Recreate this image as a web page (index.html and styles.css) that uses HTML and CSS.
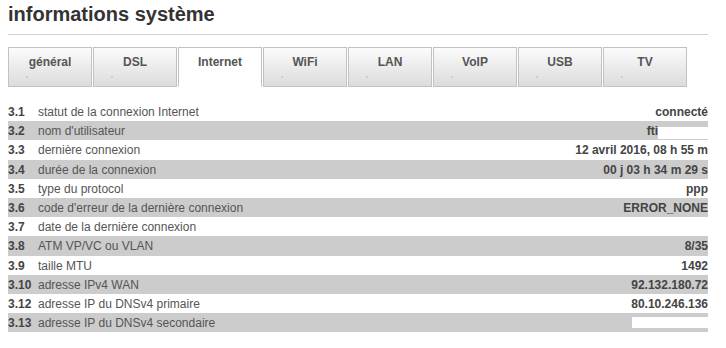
FILE: index.html
```html
<!DOCTYPE html>
<html lang="fr">
<head>
  <meta charset="UTF-8" />
  <title>informations système</title>
  <link rel="stylesheet" href="styles.css">
</head>
<body>
  <h1 class="page-title">informations système</h1>
  <div class="rule"></div>

  <ul class="tabs">
    <li class="tab">général</li>
    <li class="tab">DSL</li>
    <li class="tab active">Internet</li>
    <li class="tab">WiFi</li>
    <li class="tab">LAN</li>
    <li class="tab">VoIP</li>
    <li class="tab">USB</li>
    <li class="tab">TV</li>
  </ul>

  <div class="info">
    <div class="row"><span class="num">3.1</span><span class="label">statut de la connexion Internet</span><span class="value">connecté</span></div>
    <div class="row"><span class="num">3.2</span><span class="label">nom d'utilisateur</span><span class="value">fti<span class="blank blank-user"></span></span></div>
    <div class="row"><span class="num">3.3</span><span class="label">dernière connexion</span><span class="value">12 avril 2016, 08 h 55 m</span></div>
    <div class="row"><span class="num">3.4</span><span class="label">durée de la connexion</span><span class="value">00 j 03 h 34 m 29 s</span></div>
    <div class="row"><span class="num">3.5</span><span class="label">type du protocol</span><span class="value">ppp</span></div>
    <div class="row"><span class="num">3.6</span><span class="label">code d'erreur de la dernière connexion</span><span class="value">ERROR_NONE</span></div>
    <div class="row"><span class="num">3.7</span><span class="label">date de la dernière connexion</span><span class="value"></span></div>
    <div class="row"><span class="num">3.8</span><span class="label">ATM VP/VC ou VLAN</span><span class="value">8/35</span></div>
    <div class="row"><span class="num">3.9</span><span class="label">taille MTU</span><span class="value">1492</span></div>
    <div class="row"><span class="num">3.10</span><span class="label">adresse IPv4 WAN</span><span class="value">92.132.180.72</span></div>
    <div class="row"><span class="num">3.12</span><span class="label">adresse IP du DNSv4 primaire</span><span class="value">80.10.246.136</span></div>
    <div class="row"><span class="num">3.13</span><span class="label">adresse IP du DNSv4 secondaire</span><span class="value"><span class="blank blank-dns"></span></span></div>
  </div>
</body>
</html>
```

FILE: styles.css
```css
body {
  font-family: 'Liberation Sans', Arial, sans-serif;
  margin: 0;
  padding: 3px 8px 0;
  background: #fff;
  color: #444;
  width: 700px;
}
.page-title {
  margin: 0;
  font-size: 20px;
  line-height: 23px;
  font-weight: bold;
  color: #333;
}
.rule {
  height: 1px;
  background: #d0d0d0;
  margin-top: 8px;
}
.tabs {
  list-style: none;
  margin: 12px 0 0;
  padding: 0;
  display: flex;
  gap: 1px;
}
.tab {
  position: relative;
  box-sizing: border-box;
  width: 84px;
  height: 40px;
  padding-top: 7px;
  border: 1px solid #c2c2c2;
  background: linear-gradient(#fbfbfb, #dcdcdc);
  font-size: 12px;
  line-height: 14px;
  font-weight: bold;
  color: #555;
  text-align: center;
}
.tab::after {
  content: '';
  position: absolute;
  left: 17px;
  top: 28px;
  width: 2px;
  height: 2px;
  background: #cfcfcf;
}
.tab.active {
  background: #fff;
  border-bottom-color: #fff;
}
.tab.active::after {
  display: none;
}
.info {
  margin-top: 15px;
}
.row {
  display: grid;
  grid-template-columns: 30px 1fr auto;
  box-sizing: border-box;
  height: 19.2px;
  padding-top: 1px;
  font-size: 12px;
  line-height: 18.2px;
}
.row:nth-child(even) {
  background: #cccccc;
}
.num {
  font-weight: bold;
  color: #444;
}
.label {
  color: #555;
}
.value {
  font-weight: bold;
  color: #444;
  text-align: right;
  white-space: nowrap;
}
.blank {
  display: inline-block;
  background: #fff;
  vertical-align: top;
}
.blank-user {
  width: 50px;
  height: 12px;
  margin-top: 5px;
}
.blank-dns {
  width: 76px;
  height: 11px;
  margin-top: 3px;
}
```
